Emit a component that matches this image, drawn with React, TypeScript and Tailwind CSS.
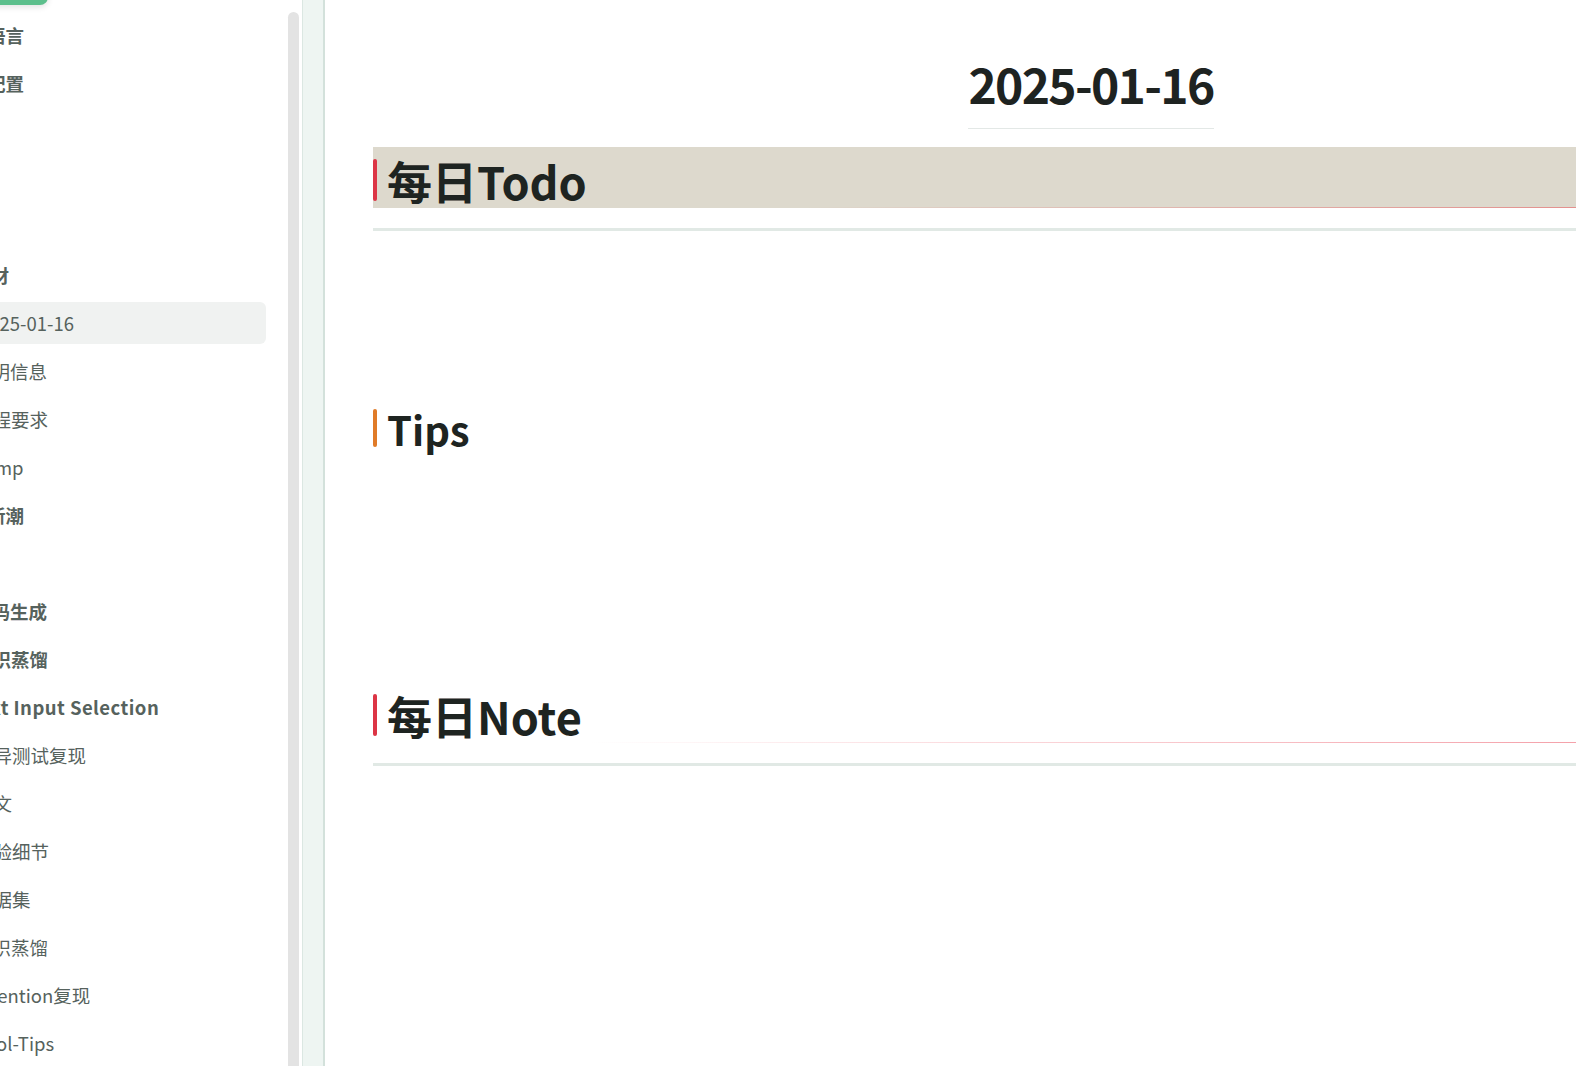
import React from 'react';

type NavItem = { text: string; offset: number; bold?: boolean; active?: boolean; wide?: boolean };

const items: (NavItem | null)[] = [
  { text: '语言', offset: -13, bold: true },
  { text: '配置', offset: -13, bold: true },
  null,
  null,
  null,
  { text: '素材', offset: -28, bold: true },
  { text: '2025-01-16', offset: -21, active: true },
  { text: '说明信息', offset: -27 },
  { text: '工程要求', offset: -26 },
  { text: 'Temp', offset: -25 },
  { text: '新潮', offset: -13, bold: true },
  null,
  { text: '代码生成', offset: -27, bold: true },
  { text: '知识蒸馏', offset: -26, bold: true },
  { text: 'Text Input Selection', offset: -31, bold: true, wide: true },
  { text: '差异测试复现', offset: -25 },
  { text: '论文', offset: -25 },
  { text: '实验细节', offset: -25 },
  { text: '数据集', offset: -25 },
  { text: '知识蒸馏', offset: -26 },
  { text: 'Attention复现', offset: -27 },
  { text: 'Tool-Tips', offset: -25 },
];

function Sidebar() {
  return (
    <aside className="relative w-[302px] shrink-0 overflow-hidden bg-white">
      {/* green button peeking at the top */}
      <div className="absolute -top-[20px] -left-[20px] h-[25px] w-[68px] rounded-[8px] bg-[#5cbf8c] shadow-[0_2px_6px_rgba(0,0,0,0.12)]" />
      <ul className="pt-[14px] pr-[36px]">
        {items.map((it, i) => (
          <li
            key={i}
            className={`mb-[6px] flex h-[42px] items-center rounded-r-[6px] ${it?.active ? 'bg-[#f0f2f1]' : ''}`}
          >
            {it && (
              <span
                className={`whitespace-nowrap text-[18.5px] leading-none text-[#56625d] ${it.bold ? 'font-bold' : 'font-normal'} ${it.wide ? 'tracking-[0.45px]' : ''}`}
                style={{ marginLeft: it.offset }}
              >
                {it.text}
              </span>
            )}
          </li>
        ))}
      </ul>
      {/* scrollbar thumb */}
      <div className="absolute top-[12px] right-[3px] bottom-0 w-[11px] rounded-t-[6px] bg-[#e3e3e3]" />
    </aside>
  );
}

function Heading({ title, bar, bg, line }: { title: string; bar: string; bg?: string; line?: string }) {
  return (
    <div className={`relative flex h-[61px] items-center ${bg ?? ''}`}>
      <div className={`mt-[5px] mr-[10px] h-[42px] w-[4px] rounded-[2px] ${bar}`} />
      <h2 className="pt-[6px] text-[45px] leading-none font-bold text-[#1e2421]">{title}</h2>
      {line && <div className={`absolute right-0 bottom-0 left-0 h-[1px] ${line}`} />}
    </div>
  );
}

export default function App() {
  return (
    <div
      className="flex h-screen w-full overflow-hidden bg-white"
      style={{ fontFamily: '"Noto Sans CJK SC", "Noto Sans", sans-serif' }}
    >
      <Sidebar />
      <div className="w-[23px] shrink-0 border-r-[2px] border-l-[1px] border-r-[#d3e1db] border-l-[#dbe7e2] bg-[#eef5f2]" />
      <main className="min-w-0 flex-1 overflow-hidden">
        <div className="w-[1484px] pl-[48px]">
          <div className="text-center">
            <h1 className="mt-[47px] inline-block border-b border-[#e3e8e6] pb-[9px] text-[48px] leading-[72px] font-bold tracking-[-1.7px] text-[#1e2321]">
              2025-01-16
            </h1>
          </div>

          <div className="mt-[18px]">
            <Heading
              title="每日Todo"
              bar="bg-[#dc3545]"
              bg="bg-[#ddd9cd]"
              line="bg-gradient-to-r from-transparent from-30% to-[#e57b7b]"
            />
            <div className="mt-[20px] h-[3px] bg-[#e1e9e5]" />
          </div>

          <div className="mt-[166px] flex h-[60px] items-center">
            <div className="mt-[2px] mr-[10px] h-[38px] w-[4px] rounded-[2px] bg-[#e07b28]" />
            <h2 className="pt-[3px] text-[40px] leading-none font-bold text-[#1e2421]">Tips</h2>
          </div>

          <div className="mt-[225px]">
            <Heading
              title="每日Note"
              bar="bg-[#dc3545]"
              line="bg-gradient-to-r from-transparent from-15% to-[#f28b96]"
            />
            <div className="mt-[20px] h-[3px] bg-[#e1e9e5]" />
          </div>
        </div>
      </main>
    </div>
  );
}
